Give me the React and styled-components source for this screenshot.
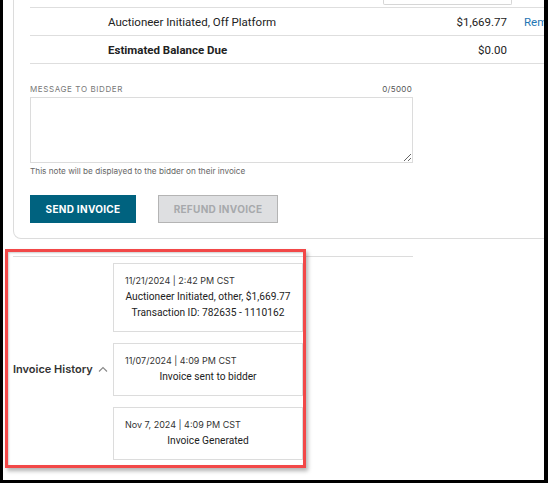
import React from "react";
import styled, { createGlobalStyle } from "styled-components";

const Global = createGlobalStyle`
  html, body { margin: 0; padding: 0; background: #fff; }
  body { font-family: Roboto, Inter, "Noto Sans", Arial, sans-serif; color: #222; }
  * { box-sizing: border-box; }
`;

const Frame = styled.div`
  position: relative;
  width: 548px;
  height: 483px;
  overflow: hidden;
  background: #fff;
  border-left: 3px solid #000;
  border-right: 4px solid #000;
  border-bottom: 3px solid #000;
  padding-left: 10px;
`;

const Card = styled.div`
  width: 620px;
  border: 1px solid #dcdcdc;
  border-top: none;
  border-radius: 0 0 8px 8px;
  padding: 0 0 15px 16px;
`;

const TopRow = styled.div`
  display: flex;
  align-items: flex-start;
  height: 8px;
  border-bottom: 1px solid #dedede;
`;

const InputStub = styled.div`
  margin-left: 353px;
  width: 129px;
  height: 5px;
  border: 1px solid #d6d6d6;
  border-top: none;
  border-radius: 0 0 2px 2px;
`;

const Row = styled.div`
  display: flex;
  align-items: center;
  height: 28px;
  border-bottom: 1px solid #dedede;
  font-size: 11.5px;
  color: #222;
`;

const CellLabel = styled.div`
  padding-left: 78px;
  width: 387px;
  flex: none;
  font-weight: ${(p) => (p.$bold ? 700 : 400)};
`;

const Amount = styled.div`
  width: 90px;
  flex: none;
  text-align: right;
`;

const LinkCell = styled.a`
  margin-left: 17px;
  color: #1f76b4;
  text-decoration: none;
  font-size: 11.5px;
`;

const MessageBlock = styled.div`
  width: 382px;
  margin-top: 20px;
`;

const LabelLine = styled.div`
  display: flex;
  justify-content: space-between;
  font-family: Inter, Roboto, sans-serif;
  font-size: 8px;
  line-height: 10px;
  letter-spacing: 0.6px;
  color: #777;
  text-transform: uppercase;
`;

const Count = styled.span`
  color: #555;
  letter-spacing: 0.3px;
`;

const TextArea = styled.textarea`
  display: block;
  width: 383px;
  height: 66px;
  margin-top: 3px;
  border: 1px solid #dcdcdc;
  resize: both;
  font-family: inherit;
`;

const Hint = styled.div`
  font-family: Inter, Roboto, sans-serif;
  font-size: 8.2px;
  line-height: 10px;
  margin-top: 3px;
  color: #666;
`;

const Buttons = styled.div`
  display: flex;
  gap: 22px;
  margin-top: 19px;
`;

const Button = styled.button`
  height: 28px;
  width: ${(p) => p.$w}px;
  font-family: Inter, Roboto, sans-serif;
  font-size: 10px;
  font-weight: 700;
  letter-spacing: 0.3px;
  border-radius: 0;
  border: 1px solid ${(p) => (p.$primary ? "#00627f" : "#b4b4b4")};
  background: ${(p) => (p.$primary ? "#00627f" : "#dedfe1")};
  color: ${(p) => (p.$primary ? "#fff" : "#a7a9ac")};
  padding: 0;
`;

const History = styled.div`
  width: 400px;
  margin-top: 17px;
  border-top: 1px solid #dcdcdc;
  display: flex;
  padding-top: 6px;
`;

const HistoryTitle = styled.div`
  width: 100px;
  flex: none;
  display: flex;
  align-items: center;
  gap: 5px;
  padding-top: 14px;
  font-family: Inter, Roboto, sans-serif;
  font-size: 11px;
  font-weight: 600;
  color: #333;
`;

const Entries = styled.div`
  display: flex;
  flex-direction: column;
  gap: 11px;
`;

const Entry = styled.div`
  width: 190px;
  border: 1px solid #dcdcdc;
  padding: 11px 11px 10px;
  text-align: center;
`;

const Stamp = styled.div`
  text-align: left;
  font-family: Inter, Roboto, sans-serif;
  font-size: 9px;
  line-height: 12px;
  margin-bottom: 2px;
  color: #333;
`;

const Line = styled.div`
  font-size: 10.2px;
  line-height: 16px;
  color: #222;
  white-space: nowrap;
`;

const Callout = styled.div`
  position: absolute;
  left: 2px;
  top: 249px;
  width: 301px;
  height: 219px;
  border: 3px solid #f24848;
  box-shadow: 2px 3px 4px rgba(0, 0, 0, 0.3), inset 1px 1px 2px rgba(0, 0, 0, 0.2);
  pointer-events: none;
`;

const history = [
  { stamp: "11/21/2024 | 2:42 PM CST", lines: ["Auctioneer Initiated, other, $1,669.77", "Transaction ID: 782635 - 1110162"] },
  { stamp: "11/07/2024 | 4:09 PM CST", lines: ["Invoice sent to bidder"] },
  { stamp: "Nov 7, 2024 | 4:09 PM CST", lines: ["Invoice Generated"] },
];

export default function App() {
  return (
    <>
      <Global />
      <Frame>
        <Card>
          <TopRow>
            <InputStub />
          </TopRow>
          <Row>
            <CellLabel>Auctioneer Initiated, Off Platform</CellLabel>
            <Amount>$1,669.77</Amount>
            <LinkCell href="#">Remove</LinkCell>
          </Row>
          <Row>
            <CellLabel $bold>Estimated Balance Due</CellLabel>
            <Amount>$0.00</Amount>
          </Row>
          <MessageBlock>
            <LabelLine>
              <span>Message to Bidder</span>
              <Count>0/5000</Count>
            </LabelLine>
            <TextArea />
            <Hint>This note will be displayed to the bidder on their invoice</Hint>
            <Buttons>
              <Button $primary $w={106}>SEND INVOICE</Button>
              <Button $w={120} disabled>REFUND INVOICE</Button>
            </Buttons>
          </MessageBlock>
        </Card>
        <History>
          <HistoryTitle>
            Invoice History
            <svg width="10" height="6" viewBox="0 0 10 6" fill="none">
              <path d="M1 5.5 L5 1.5 L9 5.5" stroke="#888" strokeWidth="1.1" />
            </svg>
          </HistoryTitle>
          <Entries>
            {history.map((h) => (
              <Entry key={h.stamp}>
                <Stamp>{h.stamp}</Stamp>
                {h.lines.map((l) => (
                  <Line key={l}>{l}</Line>
                ))}
              </Entry>
            ))}
          </Entries>
        </History>
        <Callout />
      </Frame>
    </>
  );
}
